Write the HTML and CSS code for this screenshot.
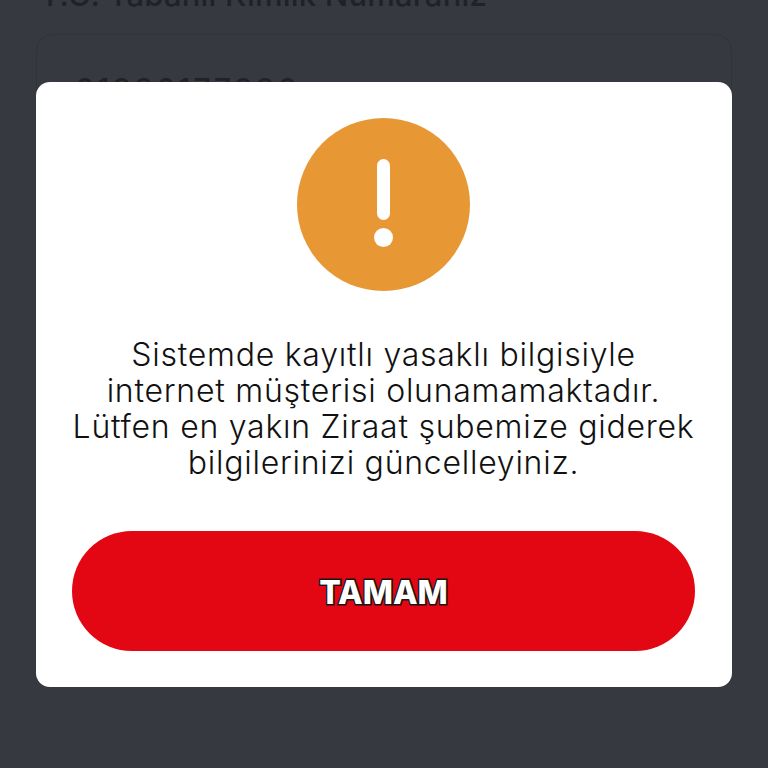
FILE: index.html
```html
<!DOCTYPE html>
<html lang="en">
<head>
    <meta charset="UTF-8">
    <meta name="viewport" content="width=device-width, initial-scale=1.0">
    <title>Ziraat</title>
    <link rel="stylesheet" href="styles.css">
</head>
<body>
    <div class="page">
        <p class="field-label">T.C. Tabanlı Kimlik Numaranız</p>
        <div class="field-box">
            <span class="field-value">61836177896</span>
        </div>
    </div>

    <div class="modal">
        <div class="alert-icon">
            <span class="alert-bar"></span>
            <span class="alert-dot"></span>
        </div>
        <p class="modal-text">Sistemde kayıtlı yasaklı bilgisiyle<br>internet müşterisi olunamamaktadır.<br>Lütfen en yakın Ziraat şubemize giderek<br>bilgilerinizi güncelleyiniz.</p>
        <button type="button" class="ok-button">TAMAM</button>
    </div>
</body>
</html>
```

FILE: styles.css
```css
/* General Reset */
* {
    margin: 0;
    padding: 0;
    box-sizing: border-box;
    font-family: 'Inter', sans-serif;
}

body {
    position: relative;
    height: 768px;
    overflow: hidden;
    background: #363940;
}

/* Page behind the dialog */
.page {
    padding: 0 36px;
}

.field-label {
    margin-top: -23px;
    padding-left: 4px;
    font-size: 31px;
    font-weight: 500;
    line-height: 36px;
    letter-spacing: 0.2px;
    color: #202228;
}

.field-box {
    height: 300px;
    margin-top: 21px;
    padding: 36px 38px 0;
    border: 1px solid #31343b;
    border-radius: 16px;
}

.field-value {
    font-size: 30px;
    font-weight: 500;
    letter-spacing: 3px;
    color: #202228;
}

/* Dialog */
.modal {
    position: absolute;
    left: 36px;
    top: 82px;
    width: 696px;
    height: 605px;
    padding: 36px 37px 0 36px;
    display: flex;
    flex-direction: column;
    align-items: center;
    background: #fff;
    border-radius: 14px;
}

.alert-icon {
    width: 173px;
    height: 173px;
    flex-shrink: 0;
    padding-top: 41px;
    display: flex;
    flex-direction: column;
    align-items: center;
    border-radius: 50%;
    background: #e79835;
}

.alert-bar {
    width: 13px;
    height: 61px;
    border-radius: 7px;
    background: #fff;
}

.alert-dot {
    width: 19px;
    height: 19px;
    margin-top: 8px;
    border-radius: 50%;
    background: #fff;
}

.modal-text {
    margin-top: 46px;
    font-size: 32px;
    font-weight: 300;
    line-height: 36px;
    letter-spacing: 0.75px;
    text-align: center;
    white-space: nowrap;
    color: #111;
}

.ok-button {
    width: 623px;
    height: 120px;
    margin-top: 50px;
    padding-top: 2px;
    flex-shrink: 0;
    border: none;
    border-radius: 60px;
    background: #e30613;
    color: #fff;
    font-size: 32px;
    font-weight: 800;
    -webkit-text-stroke: 3px #1a1414;
    paint-order: stroke fill;
}
```
